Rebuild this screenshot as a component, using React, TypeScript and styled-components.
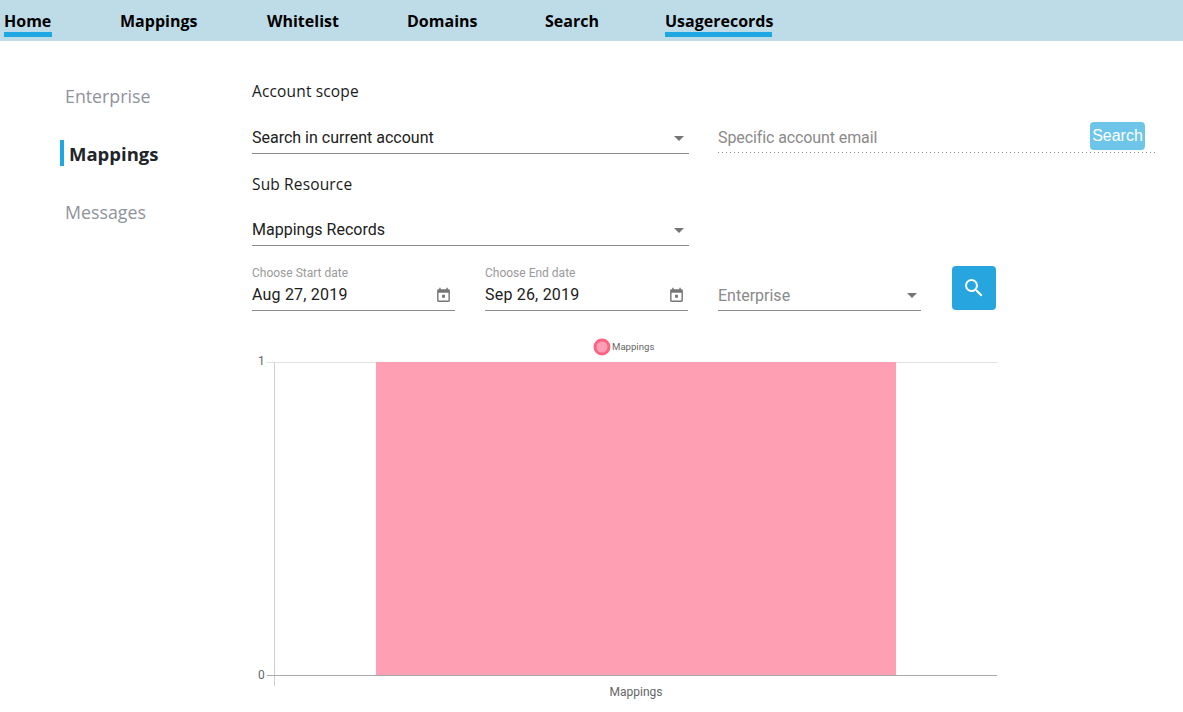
import React from "react";
import styled, { createGlobalStyle } from "styled-components";
import { MdArrowDropDown, MdSearch } from "react-icons/md";

const GlobalStyle = createGlobalStyle`
  html, body {
    margin: 0;
    padding: 0;
    background: #fff;
    font-family: "Roboto", "Liberation Sans", sans-serif;
  }
`;

const navItems = [
  { label: "Home", active: true, width: 48 },
  { label: "Mappings", active: false, width: 79 },
  { label: "Whitelist", active: false, width: 72 },
  { label: "Domains", active: false, width: 70 },
  { label: "Search", active: false, width: 52 },
  { label: "Usagerecords", active: true, width: 107 },
];

const sideItems = [
  { label: "Enterprise", active: false },
  { label: "Mappings", active: true },
  { label: "Messages", active: false },
];

const CalendarIcon = () => (
  <CalendarSvg viewBox="0 0 24 24" fill="currentColor">
    <path d="M19 3h-1V1h-2v2H8V1H6v2H5c-1.11 0-1.99.9-1.99 2L3 19c0 1.1.89 2 2 2h14c1.1 0 2-.9 2-2V5c0-1.1-.9-2-2-2zm0 16H5V8h14v11zM10 11h4v4h-4z" />
  </CalendarSvg>
);

const Chart = () => (
  <svg width="760" height="372" viewBox="0 0 760 372" style={{ display: "block" }}>
    <circle cx="350" cy="12" r="7" fill="#ff9fb3" stroke="#ff6384" strokeWidth="3" />
    <text x="360" y="15" fontSize="9.6" fill="#666" fontFamily="Roboto, sans-serif">
      Mappings
    </text>
    <line x1="15" x2="745" y1="27.5" y2="27.5" stroke="#e2e2e2" />
    <line x1="22.5" x2="22.5" y1="27" y2="351" stroke="#cfcfcf" />
    <rect x="124" y="27" width="520" height="313.5" fill="#ff9fb3" />
    <line x1="15" x2="745" y1="340.5" y2="340.5" stroke="#a9a9a9" />
    <text x="6" y="30" fontSize="12" fill="#666" fontFamily="Roboto, sans-serif">
      1
    </text>
    <text x="6" y="344" fontSize="12" fill="#666" fontFamily="Roboto, sans-serif">
      0
    </text>
    <text x="384" y="361" fontSize="12" fill="#666" textAnchor="middle" fontFamily="Roboto, sans-serif">
      Mappings
    </text>
  </svg>
);

const App = () => {
  return (
    <Page>
      <GlobalStyle />
      <Header>
        {navItems.map(item => (
          <NavItem key={item.label} $active={item.active} $width={item.width}>
            {item.label}
          </NavItem>
        ))}
      </Header>
      <Body>
        <SideNav>
          {sideItems.map(item => (
            <SideItem key={item.label} $active={item.active}>
              {item.label}
            </SideItem>
          ))}
        </SideNav>
        <Main>
          <SectionLabel>Account scope</SectionLabel>
          <ScopeRow>
            <SelectField>
              <span>Search in current account</span>
              <Arrow $shift={2} />
            </SelectField>
            <EmailField>
              <EmailHint>Specific account email</EmailHint>
              <SearchButton>Search</SearchButton>
            </EmailField>
          </ScopeRow>
          <SectionLabel>Sub Resource</SectionLabel>
          <ResourceRow>
            <SelectField>
              <span>Mappings Records</span>
              <Arrow $shift={2} />
            </SelectField>
          </ResourceRow>
          <FilterRow>
            <DateField>
              <DateLabel>Choose Start date</DateLabel>
              <DateValue>
                <span>Aug 27, 2019</span>
                <CalendarIcon />
              </DateValue>
            </DateField>
            <DateField>
              <DateLabel>Choose End date</DateLabel>
              <DateValue>
                <span>Sep 26, 2019</span>
                <CalendarIcon />
              </DateValue>
            </DateField>
            <EnterpriseField>
              <span>Enterprise</span>
              <Arrow $shift={3} />
            </EnterpriseField>
            <IconButton>
              <MdSearch size={24} />
            </IconButton>
          </FilterRow>
          <ChartBox>
            <Chart />
          </ChartBox>
        </Main>
      </Body>
    </Page>
  );
};

const Page = styled.div`
  width: 1183px;
  height: 712px;
  overflow: hidden;
  background: #fff;
`;

const Header = styled.nav`
  height: 41px;
  background: #bedce8;
  display: flex;
  gap: 68px;
  padding-left: 4px;
  box-sizing: border-box;
`;

const NavItem = styled.a<{ $active: boolean; $width: number }>`
  width: ${props => props.$width}px;
  height: 37px;
  box-sizing: border-box;
  padding-top: 10px;
  font-family: "Open Sans", "Noto Sans", sans-serif;
  font-size: 16px;
  line-height: 22px;
  font-weight: 700;
  white-space: nowrap;
  color: #000;
  border-bottom: 5px solid ${props => (props.$active ? "#1ea7e0" : "transparent")};
`;

const Body = styled.div`
  display: flex;
  align-items: flex-start;
`;

const SideNav = styled.aside`
  width: 192px;
  margin-left: 60px;
  padding-top: 41px;
  display: flex;
  flex-direction: column;
  gap: 32px;
  box-sizing: border-box;
`;

const SideItem = styled.div<{ $active: boolean }>`
  height: 26px;
  line-height: 28px;
  font-family: "Open Sans", "Noto Sans", sans-serif;
  font-size: ${props => (props.$active ? "18.5px" : "17.8px")};
  font-weight: ${props => (props.$active ? 700 : 400)};
  color: ${props => (props.$active ? "#212529" : "#8f939b")};
  padding-left: 5px;
  border-left: ${props => (props.$active ? "4px solid #1ea7e0" : "none")};
`;

const Main = styled.main`
  flex: 1;
  padding-top: 40px;
`;

const SectionLabel = styled.div`
  height: 20px;
  line-height: 20px;
  font-family: "Open Sans", "Noto Sans", sans-serif;
  font-size: 15.5px;
  font-weight: 500;
  letter-spacing: 0.15px;
  color: #1a1a1a;
`;

const ScopeRow = styled.div`
  display: flex;
  gap: 29px;
  margin-top: 19px;
  margin-bottom: 20px;
`;

const ResourceRow = styled.div`
  margin-top: 18px;
  margin-bottom: 20px;
`;

const SelectField = styled.div`
  width: 437px;
  height: 34px;
  box-sizing: border-box;
  border-bottom: 1px solid #8c8c8c;
  display: flex;
  align-items: center;
  justify-content: space-between;
  padding-top: 2px;
  font-size: 16px;
  color: #212121;
`;

const Arrow = styled(MdArrowDropDown)<{ $shift: number }>`
  width: 24px;
  height: 24px;
  margin-right: -${props => props.$shift}px;
  color: #757575;
  flex-shrink: 0;
`;

const EmailField = styled.div`
  width: 439px;
  height: 33px;
  box-sizing: border-box;
  display: flex;
  align-items: center;
  justify-content: space-between;
  padding: 3px 12px 2px 0;
  font-size: 16px;
  color: #8a8a8a;
  background: repeating-linear-gradient(to right, #8c8c8c 0 1px, transparent 1px 4px) left bottom / 100% 1px no-repeat;
`;

const EmailHint = styled.span`
  letter-spacing: -0.1px;
`;

const SearchButton = styled.button`
  width: 55px;
  height: 28px;
  margin-top: -3px;
  padding: 0;
  border: none;
  border-radius: 4px;
  background: #6dc6ea;
  color: #fff;
  font-family: "Liberation Sans", sans-serif;
  font-size: 16px;
`;

const FilterRow = styled.div`
  display: flex;
  align-items: flex-start;
  gap: 30px;
`;

const DateField = styled.div`
  width: 203px;
  height: 45px;
  box-sizing: border-box;
  border-bottom: 1px solid #8c8c8c;
`;

const DateLabel = styled.div`
  height: 14px;
  line-height: 14px;
  font-size: 12px;
  color: #9a9a9a;
`;

const DateValue = styled.div`
  height: 28px;
  display: flex;
  align-items: center;
  justify-content: space-between;
  font-size: 16px;
  letter-spacing: 0.2px;
  color: #212121;
`;

const CalendarSvg = styled.svg`
  width: 17px;
  height: 17px;
  margin: 2px 3px 0 0;
  color: #757575;
`;

const EnterpriseField = styled.div`
  width: 203px;
  height: 45px;
  box-sizing: border-box;
  border-bottom: 1px solid #8c8c8c;
  display: flex;
  align-items: center;
  justify-content: space-between;
  padding-top: 14px;
  font-size: 16px;
  color: #8a8a8a;
`;

const IconButton = styled.button`
  width: 44px;
  height: 44px;
  margin-left: 1px;
  padding: 0;
  border: none;
  border-radius: 4px;
  background: #27a5df;
  color: #fff;
  display: flex;
  align-items: center;
  justify-content: center;
`;

const ChartBox = styled.div`
  margin-top: 24px;
`;

export default App;
